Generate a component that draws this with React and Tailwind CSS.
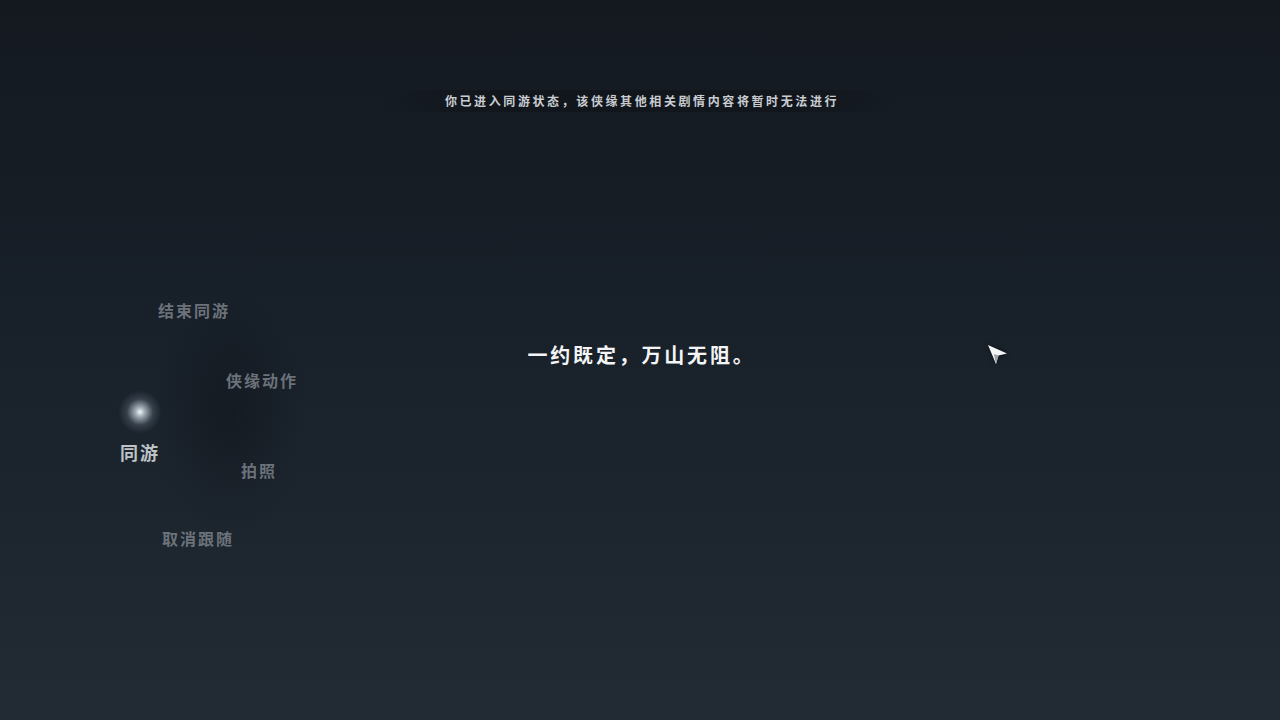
const FONT = {
  fontFamily: '"Noto Sans CJK SC", "Noto Sans", sans-serif',
};

// radial menu around the glowing "同游" node
const MENU = [
  { label: '结束同游', left: 158, top: 299 },
  { label: '侠缘动作', left: 226, top: 369 },
  { label: '拍照', left: 241, top: 459 },
  { label: '取消跟随', left: 162, top: 527 },
];

function Cursor() {
  return (
    <svg width="26" height="26" viewBox="0 0 26 26" className="drop-shadow-[0_0_2px_rgba(0,0,0,0.6)]">
      <path d="M3 3 L22 11.5 L13.5 13.5 L11 22 Z" fill="#f2f4f5" />
      <path d="M13.5 13.5 L11 22 L9 12 Z" fill="#9aa0a6" />
    </svg>
  );
}

function RadialMenu() {
  return (
    <div className="absolute left-0 top-0 h-full w-[360px]">
      <div className="absolute left-[150px] top-[290px] h-[250px] w-[160px] rounded-full bg-[radial-gradient(ellipse_at_center,rgba(10,14,20,0.35),rgba(10,14,20,0)_70%)]" />
      {MENU.map((m) => (
        <span
          key={m.label}
          className="absolute text-[16px] leading-[22px] tracking-[2px] font-bold text-[#6c727a]"
          style={{ left: m.left, top: m.top, ...FONT }}
        >
          {m.label}
        </span>
      ))}
      <div className="absolute left-[118px] top-[390px] h-11 w-11 rounded-full bg-[radial-gradient(circle,rgba(240,246,250,1)_0%,rgba(210,222,230,0.7)_16%,rgba(150,170,185,0.22)_42%,rgba(120,140,155,0)_70%)]" />
      <span
        className="absolute left-[120px] top-[440px] text-[18px] leading-[24px] tracking-[2px] font-bold text-[#bfc3c8]"
        style={FONT}
      >
        同游
      </span>
    </div>
  );
}

export default function App() {
  return (
    <div
      className="relative h-[720px] w-[1280px] overflow-hidden bg-[linear-gradient(180deg,#141920_0%,#182029_45%,#222a33_100%)]"
      style={FONT}
    >
      <div className="flex justify-center pt-[90px]">
        <div className="bg-[linear-gradient(90deg,rgba(10,13,18,0)_0%,rgba(10,13,18,0.35)_20%,rgba(10,13,18,0.35)_80%,rgba(10,13,18,0)_100%)] px-[60px] py-[2px]">
          <p className="pl-[4px] text-[12px] leading-[18px] tracking-[2.6px] font-bold text-[#c9cdd1]">
            你已进入同游状态，该侠缘其他相关剧情内容将暂时无法进行
          </p>
        </div>
      </div>

      <div className="flex justify-center pt-[229px]">
        <p className="pl-[3px] text-[20px] leading-[28px] tracking-[2.8px] font-bold text-[#f3f4f5]">
          一约既定，万山无阻。
        </p>
      </div>

      <RadialMenu />

      <div className="absolute left-[985px] top-[342px]">
        <Cursor />
      </div>
    </div>
  );
}
